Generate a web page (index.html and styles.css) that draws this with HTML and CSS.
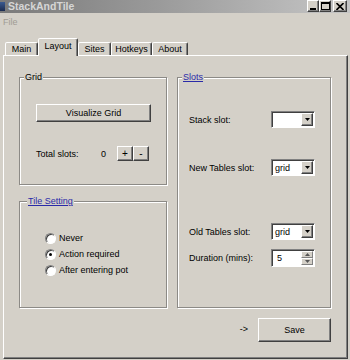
FILE: index.html
```html
<!DOCTYPE html>
<html>
<head>
<meta charset="utf-8">
<link rel="stylesheet" href="styles.css">
</head>
<body>
<div class="window">
  <div class="titlebar">
    <span class="appicon"></span>
    <span class="title">StackAndTile</span>
    <span class="tb-btns">
      <span class="tbb"><svg width="8" height="7" viewBox="0 0 8 7"><rect x="1" y="5" width="6" height="2" fill="#000"/></svg></span>
      <span class="tbb"><svg width="9" height="8" viewBox="0 0 9 8"><rect x="0.5" y="0.5" width="8" height="7" fill="none" stroke="#000"/><rect x="0" y="0" width="9" height="2" fill="#000"/></svg></span>
      <span class="tbb close"><svg width="8" height="7" viewBox="0 0 8 7"><path d="M0.5 0 L7.5 7 M7.5 0 L0.5 7" stroke="#000" stroke-width="1.6"/></svg></span>
    </span>
  </div>
  <div class="menubar"><span class="menu-item">File</span></div>
  <div class="tabs">
    <span class="tab t-main">Main</span>
    <span class="tab t-layout active">Layout</span>
    <span class="tab t-sites">Sites</span>
    <span class="tab t-hotkeys">Hotkeys</span>
    <span class="tab t-about">About</span>
  </div>
  <div class="panel">
    <div class="col-left">
      <div class="group grid-group">
        <div class="legend">Grid</div>
        <button class="btn vis">Visualize Grid</button>
        <div class="total-row">
          <span class="total-lbl">Total slots:</span>
          <span class="total-val">0</span>
          <span class="pm">
            <button class="btn sm">+</button>
            <button class="btn sm">-</button>
          </span>
        </div>
      </div>
      <div class="group tile-group">
        <div class="legend link">Tile Setting</div>
        <div class="radios">
          <div class="radio-row"><span class="radio"></span><span>Never</span></div>
          <div class="radio-row"><span class="radio checked"></span><span>Action required</span></div>
          <div class="radio-row"><span class="radio"></span><span>After entering pot</span></div>
        </div>
      </div>
    </div>
    <div class="group slots-group">
      <div class="legend link">Slots</div>
      <div class="slot-row r1">
        <span class="slot-lbl">Stack slot:</span>
        <span class="combo"><span class="combo-text"></span><span class="combo-btn"><svg width="5" height="3" viewBox="0 0 5 3"><path d="M0 0 H5 L2.5 3 Z" fill="#000"/></svg></span></span>
      </div>
      <div class="slot-row r2">
        <span class="slot-lbl">New Tables slot:</span>
        <span class="combo"><span class="combo-text">grid</span><span class="combo-btn"><svg width="5" height="3" viewBox="0 0 5 3"><path d="M0 0 H5 L2.5 3 Z" fill="#000"/></svg></span></span>
      </div>
      <div class="slot-row r3">
        <span class="slot-lbl">Old Tables slot:</span>
        <span class="combo"><span class="combo-text">grid</span><span class="combo-btn"><svg width="5" height="3" viewBox="0 0 5 3"><path d="M0 0 H5 L2.5 3 Z" fill="#000"/></svg></span></span>
      </div>
      <div class="slot-row r4">
        <span class="slot-lbl">Duration (mins):</span>
        <span class="combo spin"><span class="combo-text">5</span><span class="spin-btns"><span class="spin-btn"><svg width="5" height="3" viewBox="0 0 5 3"><path d="M0 3 H5 L2.5 0 Z" fill="#555"/></svg></span><span class="spin-btn"><svg width="5" height="3" viewBox="0 0 5 3"><path d="M0 0 H5 L2.5 3 Z" fill="#555"/></svg></span></span></span>
      </div>
    </div>
    <div class="footer">
      <span class="arrow">-&gt;</span>
      <button class="btn save">Save</button>
    </div>
  </div>
</div>
</body>
</html>
```

FILE: styles.css
```css
html, body {
  margin: 0;
  padding: 0;
  background: #d4d0c8;
}
body {
  font-family: "Liberation Sans", Arial, sans-serif;
  font-size: 9px;
  color: #000;
}
.window {
  width: 350px;
  height: 360px;
  overflow: hidden;
  background: #d4d0c8;
  display: flex;
  flex-direction: column;
}
.titlebar {
  height: 13px;
  background: linear-gradient(to right, #7a7a7a 0%, #9a9a9a 45%, #c6c6c6 100%);
  display: flex;
  align-items: center;
  flex-shrink: 0;
}
.appicon {
  width: 5px;
  height: 9px;
  background: linear-gradient(#3a5a90, #1c2c50);
}
.title {
  margin-left: 3px;
  font-weight: bold;
  font-size: 10.5px;
  color: #d6d6d6;
  line-height: 13px;
}
.tb-btns {
  margin-left: auto;
  margin-right: 3px;
  display: flex;
  align-items: flex-start;
  align-self: flex-start;
}
.tbb {
  width: 10px;
  height: 10px;
  background: #d4d0c8;
  border: 1px solid;
  border-color: #fff #404040 #404040 #fff;
  box-shadow: inset -1px -1px 0 #808080;
  display: flex;
  align-items: center;
  justify-content: center;
}
.tbb.close {
  margin-left: 2px;
  width: 12px;
}
.menubar {
  height: 26px;
  flex-shrink: 0;
}
.menu-item {
  display: inline-block;
  margin-left: 3px;
  margin-top: 4px;
  color: #a09c94;
  line-height: 11px;
}
.tabs {
  height: 16px;
  display: flex;
  align-items: flex-end;
  padding-left: 5px;
  flex-shrink: 0;
  position: relative;
  z-index: 2;
}
.tab {
  box-sizing: border-box;
  height: 13px;
  border: 1px solid;
  border-bottom: none;
  border-color: #fff #404040 transparent #fff;
  border-radius: 2px 2px 0 0;
  box-shadow: inset -1px 0 0 #808080;
  text-align: center;
  line-height: 12px;
  background: #d4d0c8;
}
.t-main { width: 33px; }
.t-layout { width: 40px; }
.t-sites { width: 33px; }
.t-hotkeys { width: 41px; }
.t-about { width: 36px; }
.tab.active {
  height: 18px;
  margin-bottom: -1px;
  line-height: 15px;
  padding-bottom: 2px;
}
.panel {
  box-sizing: border-box;
  margin-left: 3px;
  width: 345px;
  height: 304px;
  border: 1px solid;
  border-color: #fff #404040 #404040 #fff;
  box-shadow: inset -1px -1px 0 #808080;
  padding: 21px 0 0 15px;
  display: grid;
  grid-template-columns: 148px 154px;
  grid-template-rows: 231px auto;
  column-gap: 10px;
  align-content: start;
}
.col-left {
  display: flex;
  flex-direction: column;
  gap: 16px;
}
.group {
  box-sizing: border-box;
  border: 1px solid #8c8a86;
  box-shadow: 1px 1px 0 #fff, inset 1px 1px 0 #fff;
}
.grid-group { height: 108px; padding-left: 16px; }
.tile-group { height: 107px; padding-left: 25px; }
.slots-group { height: 231px; padding-left: 11px; }
.legend {
  display: block;
  width: fit-content;
  margin-top: -7px;
  padding: 0 1px;
  line-height: 13px;
  background: #d4d0c8;
  position: relative;
}
.grid-group .legend { margin-left: -12px; }
.tile-group .legend { margin-left: -18px; }
.slots-group .legend { margin-left: -7px; }
.legend.link {
  color: #2a2aa8;
  text-decoration: underline;
}
.btn {
  box-sizing: border-box;
  font-family: inherit;
  font-size: 9px;
  color: #000;
  background: #d4d0c8;
  border: 1px solid;
  border-color: #fff #404040 #404040 #fff;
  box-shadow: inset -1px -1px 0 #808080;
  padding: 0;
  margin: 0;
  display: block;
}
.vis {
  width: 115px;
  height: 18px;
  margin-top: 20px;
}
.total-row {
  display: flex;
  align-items: center;
  margin-top: 24px;
  height: 15px;
}
.total-lbl { width: 65px; }
.total-val { width: 16px; }
.pm { display: flex; }
.btn.sm {
  width: 16px;
  height: 15px;
  font-size: 10px;
  line-height: 12px;
}
.radios {
  margin-top: 22px;
  display: flex;
  flex-direction: column;
}
.radio-row {
  height: 16px;
  display: flex;
  align-items: center;
  gap: 3px;
}
.radio {
  box-sizing: border-box;
  width: 11px;
  height: 11px;
  border-radius: 50%;
  background: #fff;
  border: 1px solid;
  border-color: #808080 #fff #fff #808080;
  box-shadow: inset 1px 1px 0 #404040;
  display: flex;
  align-items: center;
  justify-content: center;
}
.radio.checked::after {
  content: "";
  width: 3px;
  height: 3px;
  border-radius: 50%;
  background: #000;
}
.slot-row {
  display: flex;
  align-items: center;
  height: 17px;
}
.r1 { margin-top: 27px; }
.r2 { margin-top: 31px; }
.r3 { margin-top: 47px; }
.r4 { margin-top: 9px; height: 18px; }
.slot-lbl { width: 82px; }
.combo {
  box-sizing: border-box;
  width: 44px;
  height: 17px;
  background: #fff;
  border: 1px solid;
  border-color: #808080 #fff #fff #808080;
  box-shadow: inset 1px 1px 0 #404040;
  display: flex;
  align-items: center;
  padding: 1px 1px 1px 2px;
}
.combo.spin { height: 18px; }
.combo-text {
  flex: 1;
  padding-left: 1px;
}
.spin .combo-text { padding-left: 3px; }
.combo-btn {
  box-sizing: border-box;
  width: 12px;
  height: 13px;
  background: #d4d0c8;
  border: 1px solid;
  border-color: #fff #404040 #404040 #fff;
  box-shadow: inset -1px -1px 0 #808080;
  display: flex;
  align-items: center;
  justify-content: center;
}
.spin-btns {
  display: flex;
  flex-direction: column;
}
.spin-btn {
  box-sizing: border-box;
  width: 12px;
  height: 7px;
  background: #d4d0c8;
  border: 1px solid;
  border-color: #fff #808080 #808080 #fff;
  display: flex;
  align-items: center;
  justify-content: center;
}
.footer {
  grid-column: 1 / 3;
  display: flex;
  justify-content: flex-end;
  align-items: center;
  margin-top: 10px;
  gap: 10px;
}
.arrow { padding-bottom: 3px; }
.save {
  width: 73px;
  height: 24px;
}
```
